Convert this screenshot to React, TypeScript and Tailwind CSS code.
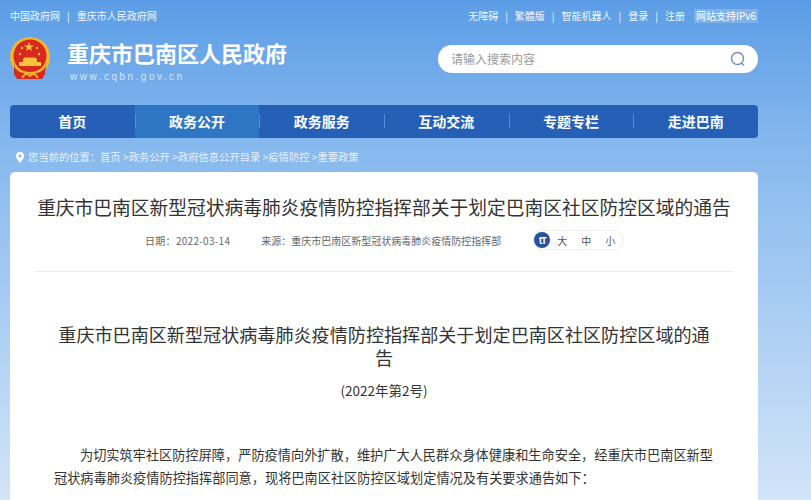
import React from "react";

const nav = ["首页", "政务公开", "政务服务", "互动交流", "专题专栏", "走进巴南"];

function Emblem() {
  return (
    <svg width="42" height="44" viewBox="0 0 42 44" className="shrink-0">
      <circle cx="21" cy="20" r="20" fill="#f2b72e" />
      <circle cx="21" cy="19" r="16.5" fill="#d8291f" />
      <polygon points="20,5 21.2,8.5 25,8.5 22,10.7 23,14 20,12 17,14 18,10.7 15,8.5 18.8,8.5" fill="#f6c33a" />
      <circle cx="13" cy="11" r="1.2" fill="#f6c33a" />
      <circle cx="28" cy="11" r="1.2" fill="#f6c33a" />
      <circle cx="11" cy="17" r="1.2" fill="#f6c33a" />
      <circle cx="30" cy="17" r="1.2" fill="#f6c33a" />
      <path d="M14 25h14v-3l-2-1.5h-10l-2 1.5z" fill="#f6c33a" />
      <rect x="10" y="25" width="22" height="4" fill="#f6c33a" />
      <path d="M5 27c2 6 6 9 16 9s14-3 16-9l-1 10-3 5H8l-3-5z" fill="#d8291f" />
      <path d="M6 29c3 5 8 7 15 7s12-2 15-7" fill="none" stroke="#f2b72e" strokeWidth="2.2" />
      <path d="M13 41l4-5 4 3 4-3 4 5" fill="none" stroke="#f2b72e" strokeWidth="1.8" />
    </svg>
  );
}

function Sep() {
  return <span className="mx-[7px] text-[10px]">|</span>;
}

export default function App() {
  return (
    <div className="h-[500px] w-[811px] overflow-hidden bg-gradient-to-b from-[#5b9de6] via-[#87b9ee] via-30% to-[#d2e4f8] font-['Noto_Sans_CJK_SC','Noto_Sans',sans-serif]">
      <div className="ml-[10px] w-[748px]">
        {/* top bar */}
        <div className="flex h-[31px] items-center justify-between text-[10px] text-[#f2f7fd]">
          <div className="flex items-center">
            <span>中国政府网</span>
            <Sep />
            <span>重庆市人民政府网</span>
          </div>
          <div className="flex items-center">
            <span>无障碍</span>
            <Sep />
            <span>繁體版</span>
            <Sep />
            <span>智能机器人</span>
            <Sep />
            <span>登录</span>
            <Sep />
            <span>注册</span>
            <span className="ml-[9px] bg-[#7fb1ea] px-[2px] leading-[14px] text-white">网站支持IPv6</span>
          </div>
        </div>
        {/* header */}
        <div className="flex h-[74px] items-start justify-between">
          <div className="flex items-start">
            <div className="mt-[6px] -ml-px">
              <Emblem />
            </div>
            <div className="ml-[16px] mt-[5px]">
              <div className="text-[22px] font-bold leading-[32px] text-white">重庆市巴南区人民政府</div>
              <div className="mt-[3px] pl-[3px] font-['Liberation_Sans',sans-serif] text-[10px] leading-[12px] tracking-[2.5px] text-[#d4e6fa]">
                www.cqbn.gov.cn
              </div>
            </div>
          </div>
          <div className="mt-[14px] flex h-[28px] w-[320px] items-center justify-between rounded-full bg-white pl-[13px] pr-[12px]">
            <span className="text-[12px] text-[#9a9a9a]">请输入搜索内容</span>
            <svg width="16" height="16" viewBox="0 0 16 16" fill="none" stroke="#6f8fc4" strokeWidth="1.4">
              <circle cx="7.5" cy="7.5" r="6" />
              <path d="M11.5 12l2.500 2.500" />
            </svg>
          </div>
        </div>
        {/* nav */}
        <div className="flex h-[33px] overflow-hidden rounded-[4px] bg-[#255fb6]">
          {nav.map((n, i) => (
            <div
              key={n}
              className={`relative flex flex-1 items-center justify-center text-[14px] font-bold text-white ${i === 1 ? "bg-[#2e76c4]" : ""}`}
            >
              {n}
              {i > 0 && <span className="absolute left-0 top-[9px] h-[14px] w-px bg-[#5c8ccf]" />}
            </div>
          ))}
        </div>
        {/* breadcrumb */}
        <div className="flex h-[34px] items-center pl-[6px] pt-[4px] text-[10.300px] text-[#e8f1fc]">
          <svg width="8" height="11" viewBox="0 0 8 11" className="mr-[4px]">
            <path fillRule="evenodd" fill="#fff" d="M4 0a4 4 0 0 1 4 4c0 2.500-4 7-4 7S0 6.500 0 4a4 4 0 0 1 4-4zm0 2.500a1.500 1.500 0 1 0 0 3 1.500 1.500 0 0 0 0-3z" />
          </svg>
          <span>您当前的位置：首页 &gt;政务公开 &gt;政府信息公开目录 &gt;疫情防控 &gt;重要政策</span>
        </div>
        {/* card */}
        <div className="h-[400px] rounded-t-[5px] bg-white px-[25px] text-[#333]">
          <h1 className="-mx-[10px] pt-[20px] text-center text-[18.750px] font-normal leading-[30px] whitespace-nowrap">
            重庆市巴南区新型冠状病毒肺炎疫情防控指挥部关于划定巴南区社区防控区域的通告
          </h1>
          <div className="mt-[6px] flex h-[24px] items-center pl-[110px] text-[10px] text-[#666]">
            <span className="tracking-[0.3px]">日期：2022-03-14</span>
            <span className="ml-[31px]">来源：重庆市巴南区新型冠状病毒肺炎疫情防控指挥部</span>
            <div className="ml-[32px] flex h-[20px] w-[91px] items-center rounded-full border border-[#eeeeee] text-[#555]">
              <span className="flex h-[16px] w-[16px] items-center justify-center rounded-full bg-[#27509f] text-[9px] font-bold leading-none tracking-[-1px] text-white">tT</span>
              <span className="ml-[7px]">大</span>
              <span className="ml-[14px]">中</span>
              <span className="ml-[14px]">小</span>
            </div>
          </div>
          <div className="mt-[19px] h-px bg-[#e9e9e9]" />
          <div className="mx-auto mt-[51px] w-[660px] text-center text-[18.100px] leading-[23px] text-[#333]">
            重庆市巴南区新型冠状病毒肺炎疫情防控指挥部关于划定巴南区社区防控区域的通告
          </div>
          <div className="mt-[11px] text-center text-[13.500px] leading-[20px]">(2022年第2号)</div>
          <div className="ml-[19px] mr-[9px] mt-[43px] text-[13.200px] leading-[23px] text-[#333]">
            <p className="indent-[26px]">
              为切实筑牢社区防控屏障，严防疫情向外扩散，维护广大人民群众身体健康和生命安全，经重庆市巴南区新型冠状病毒肺炎疫情防控指挥部同意，现将巴南区社区防控区域划定情况及有关要求通告如下：
            </p>
          </div>
        </div>
      </div>
    </div>
  );
}
